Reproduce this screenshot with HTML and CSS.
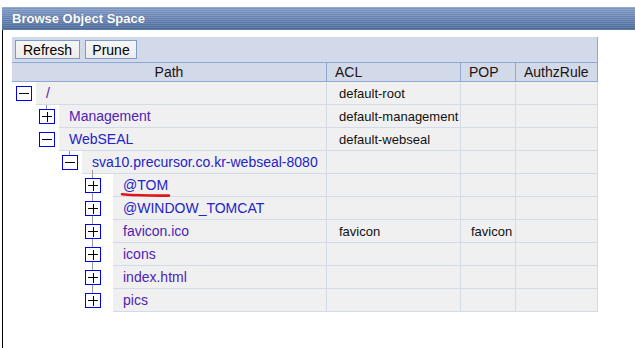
FILE: index.html
```html
<!DOCTYPE html>
<html>
<head>
<meta charset="utf-8">
<link rel="stylesheet" href="styles.css">
</head>
<body>
<div class="page">
  <div class="titlebar">Browse Object Space</div>
  <div class="content">
    <div class="grid">
      <div class="toolbar">
        <button class="btn btn-refresh">Refresh</button>
        <button class="btn btn-prune">Prune</button>
      </div>
      <div class="th th-path">Path</div>
      <div class="th">ACL</div>
      <div class="th">POP</div>
      <div class="th">AuthzRule</div>

      <div class="pc l0"><span class="tg"><svg width="16" height="15" viewBox="0 0 16 15" shape-rendering="crispEdges"><rect x="0.5" y="0.5" width="15" height="14" fill="#fff" stroke="#0000f0"/><path d="M3 7.5H13" stroke="#000"/></svg></span><div class="lbl"><a class="vis">/</a></div></div>
      <div class="cell ac">default-root</div><div class="cell pp"></div><div class="cell az"></div>

      <div class="pc l1"><span class="tg c1"><svg width="16" height="15" viewBox="0 0 16 15" shape-rendering="crispEdges"><rect x="0.5" y="0.5" width="15" height="14" fill="#fff" stroke="#0000f0"/><path d="M3 7.5H13M8 2.5V12.5" stroke="#000"/></svg></span><div class="lbl"><a class="vis">Management</a></div></div>
      <div class="cell ac">default-management</div><div class="cell pp"></div><div class="cell az"></div>

      <div class="pc l1"><span class="tg"><svg width="16" height="15" viewBox="0 0 16 15" shape-rendering="crispEdges"><rect x="0.5" y="0.5" width="15" height="14" fill="#fff" stroke="#0000f0"/><path d="M3 7.5H13" stroke="#000"/></svg></span><div class="lbl"><a class="lk">WebSEAL</a></div></div>
      <div class="cell ac">default-webseal</div><div class="cell pp"></div><div class="cell az"></div>

      <div class="pc l2"><span class="tg c1"><svg width="16" height="15" viewBox="0 0 16 15" shape-rendering="crispEdges"><rect x="0.5" y="0.5" width="15" height="14" fill="#fff" stroke="#0000f0"/><path d="M3 7.5H13" stroke="#000"/></svg></span><div class="lbl"><a class="lk">sva10.precursor.co.kr-webseal-8080</a></div></div>
      <div class="cell ac"></div><div class="cell pp"></div><div class="cell az"></div>

      <div class="pc l3"><span class="tg c2"><svg width="16" height="15" viewBox="0 0 16 15" shape-rendering="crispEdges"><rect x="0.5" y="0.5" width="15" height="14" fill="#fff" stroke="#0000f0"/><path d="M3 7.5H13M8 2.5V12.5" stroke="#000"/></svg></span><div class="lbl mark-host"><a class="lk">@TOM</a><svg class="mark" width="52" height="6" viewBox="0 0 52 6"><path d="M2 2.2C14 3.2 30 3.8 49 3.6" fill="none" stroke="#e01515" stroke-width="2.6" stroke-linecap="round"/></svg></div></div>
      <div class="cell ac"></div><div class="cell pp"></div><div class="cell az"></div>

      <div class="pc l3"><span class="tg c2"><svg width="16" height="15" viewBox="0 0 16 15" shape-rendering="crispEdges"><rect x="0.5" y="0.5" width="15" height="14" fill="#fff" stroke="#0000f0"/><path d="M3 7.5H13M8 2.5V12.5" stroke="#000"/></svg></span><div class="lbl"><a class="lk">@WINDOW_TOMCAT</a></div></div>
      <div class="cell ac"></div><div class="cell pp"></div><div class="cell az"></div>

      <div class="pc l3"><span class="tg c2"><svg width="16" height="15" viewBox="0 0 16 15" shape-rendering="crispEdges"><rect x="0.5" y="0.5" width="15" height="14" fill="#fff" stroke="#0000f0"/><path d="M3 7.5H13M8 2.5V12.5" stroke="#000"/></svg></span><div class="lbl"><a class="vis">favicon.ico</a></div></div>
      <div class="cell ac">favicon</div><div class="cell pp">favicon</div><div class="cell az"></div>

      <div class="pc l3"><span class="tg c2"><svg width="16" height="15" viewBox="0 0 16 15" shape-rendering="crispEdges"><rect x="0.5" y="0.5" width="15" height="14" fill="#fff" stroke="#0000f0"/><path d="M3 7.5H13M8 2.5V12.5" stroke="#000"/></svg></span><div class="lbl"><a class="vis">icons</a></div></div>
      <div class="cell ac"></div><div class="cell pp"></div><div class="cell az"></div>

      <div class="pc l3"><span class="tg c2"><svg width="16" height="15" viewBox="0 0 16 15" shape-rendering="crispEdges"><rect x="0.5" y="0.5" width="15" height="14" fill="#fff" stroke="#0000f0"/><path d="M3 7.5H13M8 2.5V12.5" stroke="#000"/></svg></span><div class="lbl"><a class="vis">index.html</a></div></div>
      <div class="cell ac"></div><div class="cell pp"></div><div class="cell az"></div>

      <div class="pc l3"><span class="tg c2"><svg width="16" height="15" viewBox="0 0 16 15" shape-rendering="crispEdges"><rect x="0.5" y="0.5" width="15" height="14" fill="#fff" stroke="#0000f0"/><path d="M3 7.5H13M8 2.5V12.5" stroke="#000"/></svg></span><div class="lbl"><a class="vis">pics</a></div></div>
      <div class="cell ac"></div><div class="cell pp"></div><div class="cell az"></div>
    </div>
  </div>
</div>
</body>
</html>
```
FILE: styles.css
```css
html, body {
  margin: 0;
  padding: 0;
  background: #fff;
}
body {
  font-family: "Liberation Sans", Arial, sans-serif;
  color: #111;
}
.page {
  width: 635px;
  height: 348px;
  overflow: hidden;
  padding-top: 7px;
  box-sizing: border-box;
}
.titlebar {
  margin-left: 2px;
  height: 23px;
  line-height: 23px;
  padding-left: 10px;
  font-size: 13px;
  font-weight: bold;
  color: #fff;
  text-shadow: 0 0 1px rgba(40, 60, 100, 0.6);
  background:
    repeating-linear-gradient(to bottom, rgba(255,255,255,0.10) 0 1px, rgba(0,0,0,0.06) 1px 2px),
    linear-gradient(to bottom, #88a1cc 0%, #6b88b8 50%, #4f6d9c 100%);
}
.content {
  margin-left: 2px;
  border-left: 1px solid #000;
  height: 318px;
  box-sizing: border-box;
  padding: 7px 0 0 9px;
}
.grid {
  display: grid;
  grid-template-columns: 315px 134px 55px 82px;
  grid-template-rows: 26px 19px;
  grid-auto-rows: 23px;
  width: 586px;
}
.toolbar {
  grid-column: 1 / -1;
  box-sizing: border-box;
  background: #d2d9e8;
  border-right: 1px solid #8fa8d2;
  border-bottom: 1px solid #8fa8d2;
  display: flex;
  align-items: flex-start;
  gap: 5px;
  padding: 3px 0 0 3px;
}
.btn {
  height: 19px;
  margin: 0;
  padding: 0;
  box-sizing: border-box;
  font-family: "Liberation Sans", Arial, sans-serif;
  font-size: 14px;
  line-height: 18px;
  color: #000;
  background: linear-gradient(to bottom, #f6f6f6, #ececec);
  border: 1px solid #7d9bc8;
  text-align: center;
}
.btn-refresh { width: 65px; }
.btn-prune { width: 52px; }
.th {
  box-sizing: border-box;
  background: #d2d9e8;
  border-right: 1px solid #8fa8d2;
  border-bottom: 1px solid #8fa8d2;
  font-size: 14px;
  line-height: 18px;
  color: #221111;
  padding-left: 8px;
}
.th-path {
  text-align: center;
  padding-left: 0;
}
.pc {
  display: flex;
  align-items: stretch;
}
.tg {
  position: relative;
  align-self: flex-start;
  margin-top: 4px;
  height: 15px;
  width: 16px;
  flex: none;
}
.tg svg { display: block; }
.tg.c1::before,
.tg.c2::before {
  content: "";
  position: absolute;
  left: 7px;
  width: 1px;
  background: #9a9a9a;
}
.tg.c1::before { top: -4px; height: 4px; }
.tg.c2::before { top: -8px; height: 8px; }
.l0 { padding-left: 4px; }
.l1 { padding-left: 27px; }
.l2 { padding-left: 50px; }
.l3 { padding-left: 73px; }
.lbl {
  flex: 1;
  margin-left: 4px;
  background: #f0f0f0;
  border-right: 1px solid #d3dbea;
  border-bottom: 1px solid #d3dbea;
  padding-left: 10px;
  padding-top: 1px;
  font-size: 14px;
  line-height: 21px;
  white-space: nowrap;
}
.l3 .lbl { margin-left: 12px; }
.lk { color: #2323c8; }
.vis { color: #4f22b4; }
.mark-host { position: relative; }
.mark {
  position: absolute;
  left: 7px;
  top: 18px;
}
.cell {
  background: #f0f0f0;
  border-right: 1px solid #d3dbea;
  border-bottom: 1px solid #d3dbea;
  padding-top: 1px;
  font-size: 13px;
  line-height: 21px;
  color: #111;
  white-space: nowrap;
}
.ac { padding-left: 12px; }
.pp { padding-left: 10px; }
.az { padding-left: 8px; }
```
